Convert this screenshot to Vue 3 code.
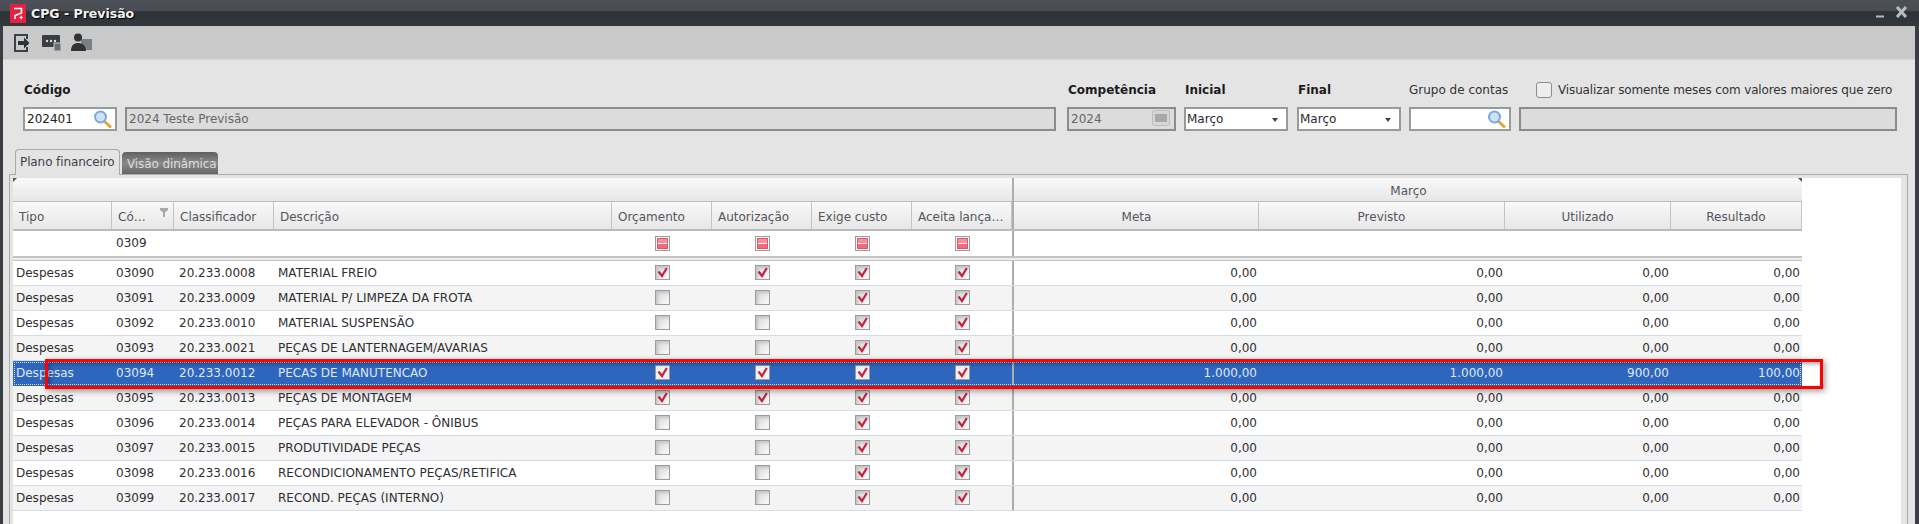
<script setup>
const rows = [
  ['03090', '20.233.0008', 'MATERIAL FREIO', [1, 1, 1, 1]],
  ['03091', '20.233.0009', 'MATERIAL P/ LIMPEZA DA FROTA', [0, 0, 1, 1]],
  ['03092', '20.233.0010', 'MATERIAL SUSPENSÃO', [0, 0, 1, 1]],
  ['03093', '20.233.0021', 'PEÇAS DE LANTERNAGEM/AVARIAS', [0, 0, 1, 1]],
  ['03094', '20.233.0012', 'PECAS DE MANUTENCAO', [1, 1, 1, 1], ['1.000,00', '1.000,00', '900,00', '100,00']],
  ['03095', '20.233.0013', 'PEÇAS DE MONTAGEM', [1, 1, 1, 1]],
  ['03096', '20.233.0014', 'PEÇAS PARA ELEVADOR - ÔNIBUS', [0, 0, 1, 1]],
  ['03097', '20.233.0015', 'PRODUTIVIDADE PEÇAS', [0, 0, 1, 1]],
  ['03098', '20.233.0016', 'RECONDICIONAMENTO PEÇAS/RETIFICA', [0, 0, 1, 1]],
  ['03099', '20.233.0017', 'RECOND. PEÇAS (INTERNO)', [0, 0, 1, 1]]
].map(([cod, cls, desc, checks, vals]) => ({
  cod, cls, desc, checks, vals: vals || ['0,00', '0,00', '0,00', '0,00'], selected: !!vals
}))
const flags = [0, 1, 2, 3]
const headLeft = ['Orçamento', 'Autorização', 'Exige custo', 'Aceita lança…']
const headRight = ['Meta', 'Previsto', 'Utilizado', 'Resultado']
</script>

<template>
  <div class="window">
    <header class="titlebar">
      <svg class="logo" width="16" height="19" viewBox="0 0 16 19">
        <rect width="16" height="19" fill="#e6213f" />
        <path d="M4 4.500h7.500v4.500L5 11.500v3.500" fill="none" stroke="#fff" stroke-width="1.600" />
        <path d="M9.500 13.500h3.500M11.200 11.800v3.500" fill="none" stroke="#fff" stroke-width="1.200" />
      </svg>
      <span class="title">CPG - Previsão</span>
      <span class="spacer"></span>
      <svg width="32" height="14" viewBox="0 0 32 14" class="controls">
        <path d="M0 11.500h8" stroke="#aeb8bf" stroke-width="2" />
        <path d="M21 2l9 10M30 2l-9 10" stroke="#b4bec5" stroke-width="3" />
      </svg>
    </header>

    <div class="frame">
      <div class="body">
        <div class="toolbar">
          <svg width="17" height="20" viewBox="0 0 17 20">
            <path d="M14 6V2H2v16h12v-4" fill="none" stroke="#3c4144" stroke-width="2" />
            <path d="M5 8h6V4.500l5.500 5.500-5.500 5.500V12H5z" fill="#2e3236" />
          </svg>
          <svg class="t2" width="20" height="18" viewBox="0 0 20 18">
            <rect y="1" width="18" height="12" rx="1" fill="#3a3e42" />
            <circle cx="5" cy="7" r="1.200" fill="#ddd" /><circle cx="9" cy="7" r="1.200" fill="#ddd" /><circle cx="13" cy="7" r="1.200" fill="#ddd" />
            <rect x="12" y="9" width="7" height="8" fill="#6a6e72" stroke="#c8c8c8" />
          </svg>
          <svg class="t3" width="21" height="18" viewBox="0 0 21 18">
            <rect x="10" y="6" width="11" height="11" fill="#7b7f82" />
            <circle cx="7" cy="4.500" r="4" fill="#2f3336" />
            <path d="M0 18c0-6 3-8 7-8s8 2 8 8z" fill="#2f3336" />
          </svg>
        </div>

        <div class="form">
          <label class="lbl strong">Código</label>
          <span></span>
          <label class="lbl strong">Competência</label>
          <label class="lbl strong">Inicial</label>
          <label class="lbl strong">Final</label>
          <label class="lbl">Grupo de contas</label>
          <label class="lbl check-lbl"><span class="round-check"></span>Visualizar somente meses com valores maiores que zero</label>

          <div class="cell g8">
            <div class="input">202401
              <svg class="lens" width="19" height="18" viewBox="0 0 19 18">
                <path d="M11 11l6 5.500" stroke="#e3a23c" stroke-width="3" stroke-linecap="round" />
                <circle cx="7.500" cy="7" r="5.500" fill="#cfe2f7" stroke="#7aa9e0" stroke-width="2" />
              </svg>
            </div>
          </div>
          <div class="cell g11"><div class="input off">2024 Teste Previsão</div></div>
          <div class="cell g8">
            <div class="input off">2024
              <svg class="cal" width="18" height="16" viewBox="0 0 18 16">
                <rect x=".5" y=".5" width="17" height="15" rx="2" fill="#d6d6d6" stroke="#bdbdbd" />
                <rect x="3" y="4" width="12" height="8" fill="#a8a8a8" />
              </svg>
            </div>
          </div>
          <div class="cell g9"><div class="input sel">Março<i class="arrow"></i></div></div>
          <div class="cell g8"><div class="input sel">Março<i class="arrow"></i></div></div>
          <div class="cell g8">
            <div class="input">
              <svg class="lens" width="19" height="18" viewBox="0 0 19 18">
                <path d="M11 11l6 5.500" stroke="#e3a23c" stroke-width="3" stroke-linecap="round" />
                <circle cx="7.500" cy="7" r="5.500" fill="#cfe2f7" stroke="#7aa9e0" stroke-width="2" />
              </svg>
            </div>
          </div>
          <div class="cell"><div class="input off"></div></div>
        </div>

        <div class="tabs">
          <div class="tab active">Plano financeiro</div>
          <div class="tab">Visão dinâmica</div>
        </div>

        <div class="panel">
          <div class="table">
            <div class="row head group">
              <div class="span-left"></div>
              <div class="sep"></div>
              <div class="span-right">Março</div>
            </div>
            <div class="row head names">
              <div class="th">Tipo</div>
              <div class="th">Có…
                <svg class="funnel" width="8" height="9" viewBox="0 0 8 9"><path d="M0 0h8v2L5 4.500V9H3V4.500L0 2z" fill="#a9a9a9" /></svg>
              </div>
              <div class="th">Classificador</div>
              <div class="th">Descrição</div>
              <div v-for="h in headLeft" :key="h" class="th">{{ h }}</div>
              <div class="sep"></div>
              <div v-for="h in headRight" :key="h" class="th center">{{ h }}</div>
            </div>
            <div class="row filter">
              <div></div>
              <div class="td cod">0309</div>
              <div></div><div></div>
              <div v-for="f in flags" :key="f" class="mid"><span class="box mixed"><i></i></span></div>
              <div class="sep"></div>
              <div></div><div></div><div></div><div></div>
            </div>
            <div class="divider"></div>
            <div
              v-for="(r, i) in rows"
              :key="r.cod"
              class="row data"
              :class="{ odd: i % 2 === 1, selected: r.selected }"
            >
              <div class="td tipo">Despesas</div>
              <div class="td cod">{{ r.cod }}</div>
              <div class="td cls">{{ r.cls }}</div>
              <div class="td desc">{{ r.desc }}</div>
              <div v-for="f in flags" :key="f" class="mid">
                <span class="box">
                  <svg v-if="r.checks[f]" width="11" height="11" viewBox="0 0 11 11">
                    <path d="M1.500 4.500L5 9l4.800-8" fill="none" stroke="#c5223f" stroke-width="2.200" />
                  </svg>
                </span>
              </div>
              <div class="sep"></div>
              <div v-for="(v, n) in r.vals" :key="n" class="td num">{{ v }}</div>
            </div>
          </div>
        </div>
      </div>
    </div>

    <div class="highlight"></div>
  </div>
</template>

<style scoped>
.window {
  position: relative;
  width: 1919px;
  height: 524px;
  overflow: hidden;
  display: flex;
  flex-direction: column;
  font-family: "DejaVu Sans", sans-serif;
  font-size: 12px;
  color: #2f2f33;
  background: #3a3d42;
}
.titlebar {
  height: 26px;
  flex: none;
  display: flex;
  align-items: center;
  padding: 0 11px 0 10px;
  box-sizing: border-box;
  background: linear-gradient(#4d5157 0, #4a4e54 40%, #2f3237 45%, #34373c 100%);
}
.logo { flex: none; }
.title {
  margin-left: 5px;
  font-size: 12.5px;
  font-weight: 700;
  color: #f2f2f2;
  text-shadow: 1px 1px 1px #000;
}
.spacer { flex: 1; }
.controls { margin-bottom: 2px; }
.frame {
  flex: 1;
  min-height: 0;
  padding: 0 4px 0 3px;
  background: #3a3d42;
}
.body {
  height: 100%;
  background: #e4e4e4;
  overflow: hidden;
}
.toolbar {
  height: 34px;
  box-sizing: border-box;
  padding: 7px 0 0 10px;
  display: flex;
  gap: 12px;
  align-items: flex-start;
  background: #c9c9c9;
  border-bottom: 1px solid #d6d6d6;
}
.t2 { margin-top: 1px; }
.t3 { margin-left: -3px; }
.form {
  display: grid;
  grid-template-columns: 102px 942px 117px 113px 112px 110px 378px;
  grid-template-rows: 20px 24px;
  row-gap: 7px;
  padding: 20px 0 0 20px;
}
.lbl {
  display: flex;
  align-items: center;
  color: #333;
  white-space: nowrap;
}
.strong { font-weight: 700; color: #1c1c20; padding-left: 1px; }
.check-lbl { padding-left: 17px; gap: 6px; letter-spacing: -.13px; }
.round-check {
  width: 14px;
  height: 14px;
  border: 1px solid #8c8c8c;
  border-radius: 3px;
  background: #eee;
}
.g8 { padding-right: 8px; }
.g9 { padding-right: 9px; }
.g11 { padding-right: 11px; }
.input {
  position: relative;
  height: 24px;
  box-sizing: border-box;
  border: 2px solid #9a9a9a;
  background: #fff;
  padding-left: 2px;
  line-height: 20px;
  color: #222;
  white-space: nowrap;
}
.off {
  background: #dcdcdc;
  border-color: #8c8c8c;
  color: #666;
}
.sel { padding-left: 1px; color: #2a2a35; }
.lens { position: absolute; right: 3px; top: 1px; }
.cal { position: absolute; right: 4px; top: 1px; }
.arrow {
  position: absolute;
  right: 8px;
  top: 9px;
  border: 3px solid transparent;
  border-top: 4px solid #444;
  border-bottom: 0;
}
.tabs {
  margin-top: 18px;
  height: 25px;
  padding-left: 12px;
  display: flex;
  align-items: flex-end;
  gap: 2px;
}
.tab {
  height: 22px;
  box-sizing: border-box;
  padding: 1px 4px 0 5px;
  line-height: 22px;
  width: 96px;
  color: #ddd;
  letter-spacing: -.1px;
  white-space: nowrap;
  overflow: hidden;
  border-radius: 4px 4px 0 0;
  background: linear-gradient(#5f5f5f, #8a8a8a 50%, #666);
}
.tab.active {
  height: 26px;
  width: 105px;
  margin-bottom: -1px;
  position: relative;
  z-index: 1;
  line-height: 24px;
  padding: 0 0 0 4px;
  color: #41414b;
  background: #e4e4e4;
  border: 1px solid #aaa;
  border-bottom: 0;
}
.panel {
  position: relative;
  margin: 0 7px 0 6px;
  height: 400px;
  box-sizing: border-box;
  border: 1px solid #aaa;
  padding: 3px 6px 0 3px;
}
.panel::before {
  content: "";
  position: absolute;
  left: 3px;
  top: 3px;
  z-index: 1;
  border-top: 4px solid #555;
  border-right: 4px solid transparent;
}
.table {
  height: 100%;
  background: #fff;
}
.row {
  display: grid;
  grid-template-columns: 99px 62px 100px 338px 100px 100px 100px 100px 3px 244px 246px 166px 131px;
  width: 1789px;
  box-sizing: border-box;
}
.head { background: linear-gradient(#f9f9f9, #e7e7e7); color: #55555c; }
.group { height: 24px; border-bottom: 1px solid #bcbcbc; line-height: 26px; }
.span-left { grid-column: 1 / 9; }
.span-right { grid-column: 10 / 14; text-align: center; position: relative; }
.span-right::after {
  content: "";
  position: absolute;
  right: 0;
  top: 0;
  border-top: 4px solid #555;
  border-left: 4px solid transparent;
}
.names { height: 29px; border-bottom: 2px solid #bcbcbc; line-height: 31px; }
.th {
  position: relative;
  padding-left: 6px;
  border-right: 1px solid #c4c4c4;
  white-space: nowrap;
  overflow: hidden;
}
.th.center { padding-left: 0; text-align: center; }
.funnel { position: absolute; right: 5px; top: 6px; }
.sep {
  background: #fff;
  border-left: 2px solid #adadad;
}
.head .sep { background: transparent; }
.filter { height: 25px; }
.divider {
  width: 1789px;
  height: 5px;
  box-sizing: border-box;
  border-top: 2px solid #c4c4c4;
  border-bottom: 1px solid #c4c4c4;
  background: #eee;
}
.filter > *, .data > * { min-width: 0; }
.data {
  height: 25px;
  border-bottom: 1px solid #d5dcec;
  line-height: 24px;
}
.odd { background: #f4f4f4; }
.odd .sep { background: #f4f4f4; }
.selected {
  background: #2f66bd;
  color: #dfe6f4;
  outline: 1px dotted #c8d8f0;
  outline-offset: -2px;
  border-bottom-color: #2f66bd;
}
.selected .sep { background: #2f66bd; }
.td { white-space: nowrap; }
.filter .td { line-height: 24px; }
.tipo { padding-left: 3px; }
.cod { padding-left: 4px; }
.cls { padding-left: 5px; }
.desc { padding-left: 4px; }
.num { text-align: right; padding-right: 2px; }
.mid { display: flex; align-items: center; justify-content: center; padding-bottom: 1px; }
.box {
  width: 15px;
  height: 15px;
  box-sizing: border-box;
  display: flex;
  align-items: center;
  justify-content: center;
  border: 1px solid #9c9c9c;
  box-shadow: inset 2px 2px 3px #c4c4c4;
  background: linear-gradient(135deg, #d6d6d6, #fbfbfb);
}
.selected .box { background: #f1f1f1; box-shadow: none; }
.mixed { background: #fff; box-shadow: none; }
.mixed i {
  display: block;
  width: 11px;
  height: 11px;
  background: linear-gradient(#f6909f 0, #f6909f 45%, #fff 45%, #fff 58%, #f4687e 58%);
  border: 1px solid #e0536a;
  box-sizing: border-box;
}
.highlight {
  position: absolute;
  left: 45px;
  top: 359px;
  width: 1778px;
  height: 30px;
  box-sizing: border-box;
  border: 3px solid #f00;
  box-shadow: 2px 2px 6px rgba(0, 0, 0, .4), inset 2px 2px 4px rgba(0, 0, 0, .35);
  pointer-events: none;
}
</style>

<style>
html, body { margin: 0; overflow: hidden; }
</style>
